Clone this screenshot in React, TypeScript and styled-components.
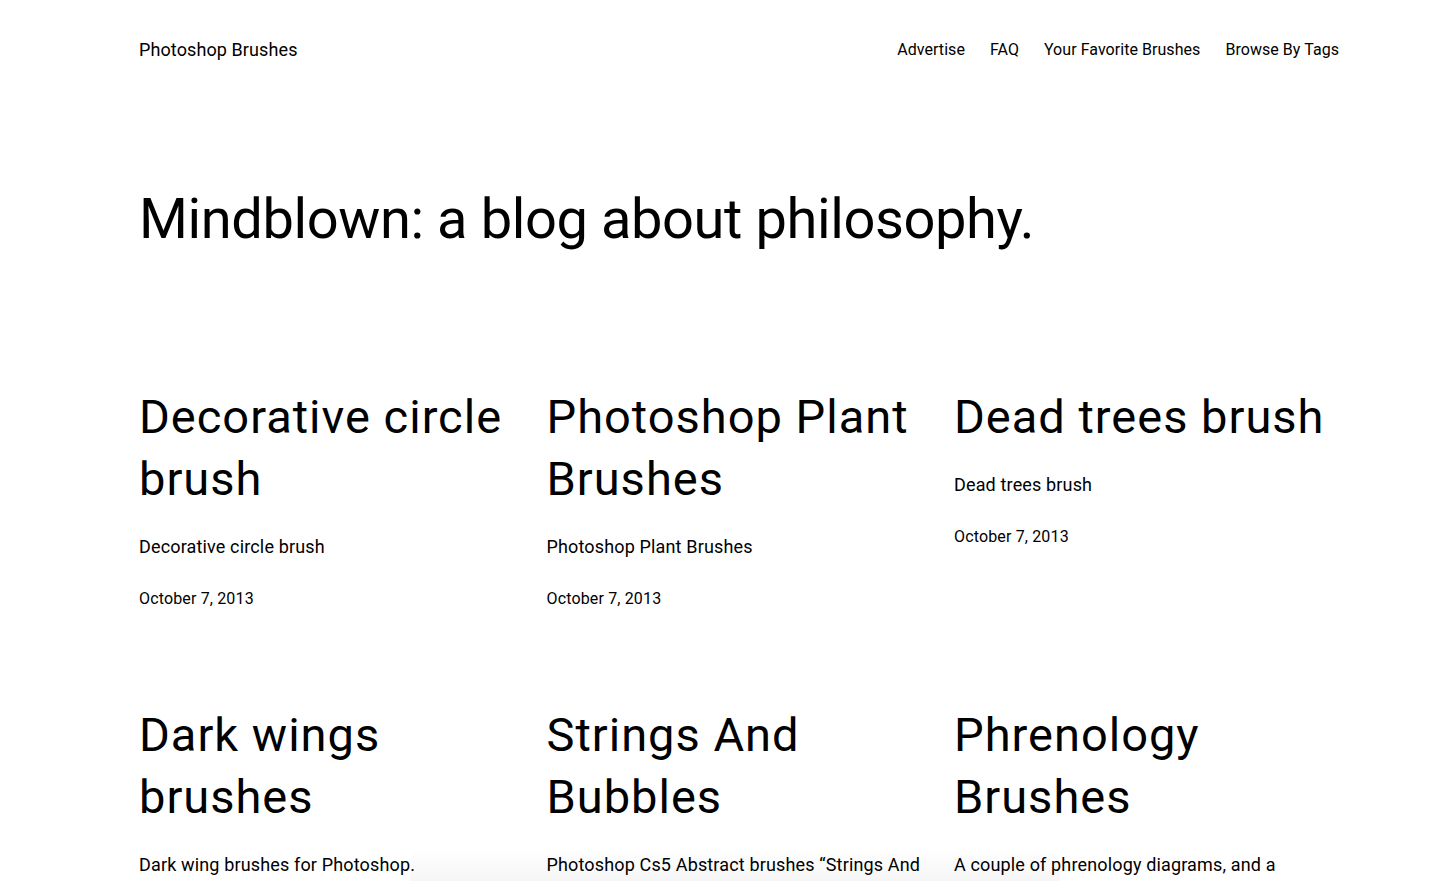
import styled, { createGlobalStyle } from "styled-components";

const posts = [
  {
    title: "Decorative circle brush",
    excerpt: "Decorative circle brush",
    date: "October 7, 2013",
  },
  {
    title: "Photoshop Plant Brushes",
    excerpt: "Photoshop Plant Brushes",
    date: "October 7, 2013",
  },
  {
    title: "Dead trees brush",
    excerpt: "Dead trees brush",
    date: "October 7, 2013",
  },
  {
    title: "Dark wings brushes",
    excerpt: "Dark wing brushes for Photoshop.",
    date: "October 7, 2013",
  },
  {
    title: "Strings And Bubbles",
    excerpt: "Photoshop Cs5 Abstract brushes \u201cStrings And Bubbles\u201d",
    date: "October 7, 2013",
  },
  {
    title: "Phrenology Brushes",
    excerpt: "A couple of phrenology diagrams, and a phrenology head.",
    date: "October 7, 2013",
  },
];

const App = () => {
  return (
    <>
      <GlobalStyle />
      <Page>
        <Header>
          <SiteTitle href="#">Photoshop Brushes</SiteTitle>
          <Nav>
            <NavLink href="#">Advertise</NavLink>
            <NavLink href="#">FAQ</NavLink>
            <NavLink href="#">Your Favorite Brushes</NavLink>
            <NavLink href="#">Browse By Tags</NavLink>
          </Nav>
        </Header>

        <Heading>Mindblown: a blog about philosophy.</Heading>

        <PostGrid>
          {posts.map((post, index) => (
            <Post key={index}>
              <PostTitle>{post.title}</PostTitle>
              <Excerpt>{post.excerpt}</Excerpt>
              <PostDate>{post.date}</PostDate>
            </Post>
          ))}
        </PostGrid>
      </Page>
      <BottomFade />
    </>
  );
};

export default App;

const GlobalStyle = createGlobalStyle`
  html, body {
    margin: 0;
    padding: 0;
    background: #ffffff;
    color: #000000;
    font-family: Roboto, Inter, "Liberation Sans", sans-serif;
    -webkit-font-smoothing: antialiased;
  }
  * {
    box-sizing: border-box;
  }
`;

const Page = styled.div`
  width: 1200px;
  margin-left: 139px;
  padding-bottom: 120px;
`;

const Header = styled.header`
  display: flex;
  justify-content: space-between;
  align-items: center;
  height: 98px;
`;

const SiteTitle = styled.a`
  font-size: 18px;
  color: #000;
  text-decoration: none;
  letter-spacing: 0.1px;
`;

const Nav = styled.nav`
  display: flex;
  gap: 25px;
`;

const NavLink = styled.a`
  font-size: 16px;
  color: #000;
  text-decoration: none;
  letter-spacing: 0.05px;
`;

const Heading = styled.h1`
  margin: 89px 0 0;
  font-size: 56px;
  font-weight: 400;
  line-height: 1.15;
  letter-spacing: -0.4px;
`;

const PostGrid = styled.div`
  display: grid;
  grid-template-columns: repeat(3, 1fr);
  column-gap: 22.5px;
  row-gap: 92px;
  margin-top: 135px;
`;

const Post = styled.article`
  display: flex;
  flex-direction: column;
`;

const PostTitle = styled.h2`
  margin: 0;
  font-size: 47px;
  font-weight: 400;
  line-height: 62px;
  letter-spacing: 1px;
`;

const Excerpt = styled.p`
  margin: 22px 0 0;
  font-size: 18px;
  line-height: 29px;
  letter-spacing: 0.15px;
`;

const PostDate = styled.time`
  margin-top: 25px;
  font-size: 16px;
  line-height: 26px;
  letter-spacing: 0.15px;
`;

const BottomFade = styled.div`
  position: fixed;
  left: 410px;
  bottom: 0;
  width: 650px;
  height: 34px;
  border-radius: 18px 18px 0 0;
  background: linear-gradient(
    to bottom,
    rgba(0, 0, 0, 0) 0%,
    rgba(0, 0, 0, 0.035) 100%
  );
  pointer-events: none;
`;
